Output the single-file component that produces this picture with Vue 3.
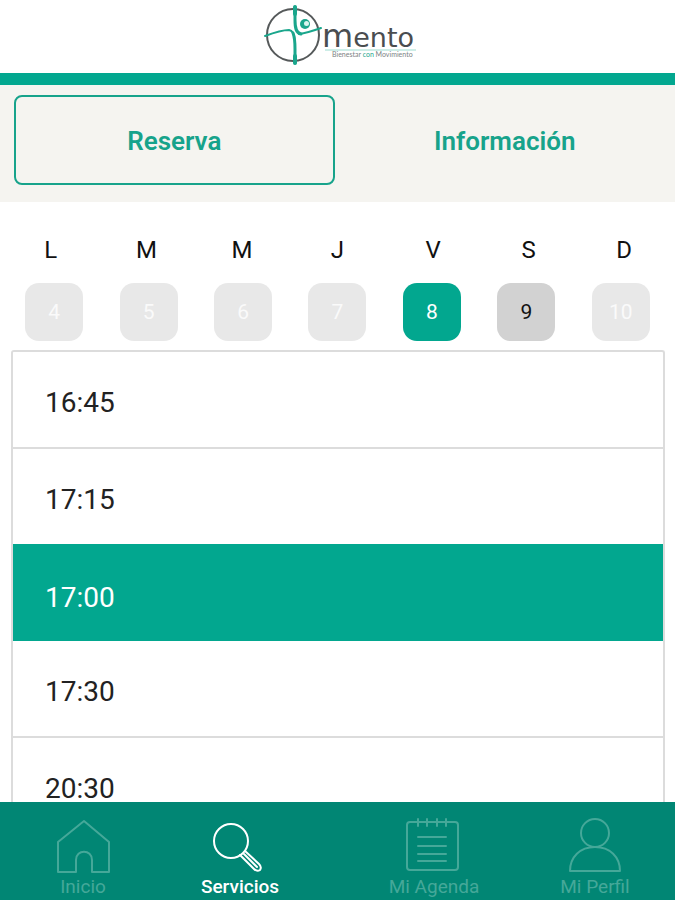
<template>
  <div class="app">
    <header class="header">
      <svg class="logo" viewBox="0 0 160 66" role="img" aria-label="Mento">
        <circle cx="33" cy="33" r="26" fill="none" stroke="#55595a" stroke-width="2" />
        <g fill="none" stroke="#1aa68c" stroke-linecap="round" stroke-linejoin="round">
          <path d="M5 34C13 31 22 28 29 28Q34 29 34.500 37" stroke-width="2" />
          <path d="M33 31C35 36 35 42 35 47V61" stroke-width="3" />
          <path d="M35 5V18C35 26 36 31 41 32" stroke-width="3" />
          <path d="M39 32C47 31 54 28.500 61 26" stroke-width="2" />
          <path d="M35 5V12M35 54V61" stroke-width="4" />
        </g>
        <circle cx="45" cy="22" r="5" fill="#1aa68c" />
        <circle cx="46.500" cy="21.500" r="2.500" fill="#d9f5ef" />
        <text x="62" y="45" class="logo-m">m<tspan class="logo-ento">ento</tspan></text>
        <path d="M65 48H156" stroke="#9bdccf" />
        <text x="72" y="55" class="logo-lema">Bienestar <tspan class="verde">con</tspan> Movimiento</text>
      </svg>
    </header>

    <div class="tabs">
      <button
        v-for="tab in tabs"
        :key="tab"
        type="button"
        class="tab"
        :class="{ activa: tab === tabActiva }"
        @click="tabActiva = tab"
      >
        {{ tab }}
      </button>
    </div>

    <main class="reserva">
      <div class="semana letras">
        <span v-for="dia in dias" :key="dia.numero">{{ dia.letra }}</span>
      </div>
      <div class="semana numeros">
        <button
          v-for="dia in dias"
          :key="dia.numero"
          type="button"
          class="dia"
          :class="{ seleccionado: dia.numero === diaActivo }"
          :disabled="!dia.disponible"
          @click="diaActivo = dia.numero"
        >
          {{ dia.numero }}
        </button>
      </div>

      <div class="horarios">
        <button
          v-for="hora in horas"
          :key="hora"
          type="button"
          class="hora"
          :class="{ seleccionada: hora === horaActiva }"
          @click="horaActiva = hora"
        >
          {{ hora }}
        </button>
      </div>
    </main>

    <nav class="menu">
      <a href="#inicio" class="enlace">
        <svg viewBox="0 0 56 56">
          <path d="M3 54V24L29 3L54 24V54H37V42C37 31 21 31 21 42V54Z" />
        </svg>
        <span>Inicio</span>
      </a>
      <a href="#servicios" class="enlace actual">
        <svg viewBox="0 0 56 56">
          <circle cx="19" cy="23" r="17" />
          <path d="M28 37L42 51Q45 54 48 52Q50 49 47 46L33 33M32 36L45 49" />
        </svg>
        <span>Servicios</span>
      </a>
      <a href="#agenda" class="enlace">
        <svg viewBox="0 0 56 56">
          <path d="M4 4H49Q52 4 52 7V49Q52 52 49 52H4Q1 52 1 49V7Q1 4 4 4" />
          <path d="M12 1V8M21 1V8M31 1V8M40 1V8M12 19H40M12 28H40M12 36H40M12 43H40" />
        </svg>
        <span>Mi Agenda</span>
      </a>
      <a href="#perfil" class="enlace">
        <svg viewBox="0 0 56 56">
          <circle cx="28" cy="15" r="14" />
          <path d="M3 53C3 39 13 29 28 29S53 39 53 53Z" />
        </svg>
        <span>Mi Perfil</span>
      </a>
    </nav>
  </div>
</template>

<script setup>
import { ref } from "vue";

const tabs = ["Reserva", "Información"];
const tabActiva = ref("Reserva");

const dias = [
  { letra: "L", numero: 4, disponible: false },
  { letra: "M", numero: 5, disponible: false },
  { letra: "M", numero: 6, disponible: false },
  { letra: "J", numero: 7, disponible: false },
  { letra: "V", numero: 8, disponible: true },
  { letra: "S", numero: 9, disponible: true },
  { letra: "D", numero: 10, disponible: false },
];
const diaActivo = ref(8);

const horas = ["16:45", "17:15", "17:00", "17:30", "20:30"];
const horaActiva = ref("17:00");
</script>

<style>
body {
  background-color: #fff;
}
</style>

<style scoped>
.app {
  display: flex;
  flex-direction: column;
  height: 100vh;
  font-family: Roboto, sans-serif;
  color: #111;
}

button {
  font-family: inherit;
  margin: 0;
  cursor: pointer;
}

.header {
  display: flex;
  justify-content: center;
  padding: 2px 0 5px 5px;
  border-bottom: 12px solid #02a78f;
}

.logo {
  display: block;
  width: 160px;
  height: 66px;
}

.logo-m {
  font-family: "DejaVu Sans", sans-serif;
  font-size: 32px;
  fill: #4a4d50;
}

.logo-ento {
  font-size: 27px;
}

.logo-lema {
  font-family: Lato, sans-serif;
  font-size: 7px;
  fill: #7d8284;
}

.verde {
  fill: #1aa68c;
}

.tabs {
  display: grid;
  grid-template-columns: 1fr 1fr;
  gap: 10px;
  padding: 10px 10px 17px 14px;
  background-color: #f5f4f0;
}

.tab {
  padding: 29px 0 27px;
  border: 2px solid transparent;
  border-radius: 8px;
  background: none;
  color: #17a38b;
  font-size: 26px;
  line-height: 30px;
  font-weight: 600;
}

.tab.activa {
  border-color: #17a38b;
}

.reserva {
  flex: 1;
  min-height: 0;
  display: flex;
  flex-direction: column;
  overflow: hidden;
}

.semana {
  display: grid;
  grid-template-columns: repeat(7, 1fr);
  justify-items: center;
}

.letras {
  padding: 33px 3px 18px;
  font-size: 24px;
  line-height: 30px;
}

.numeros {
  padding: 0 7px 9px;
}

.dia {
  width: 58px;
  height: 58px;
  padding: 0;
  border: none;
  border-radius: 14px;
  background-color: #d2d2d2;
  color: #111;
  font-size: 21px;
}

.dia:disabled {
  background-color: #e8e8e8;
  color: #fafafa;
}

.dia.seleccionado {
  background-color: #02a78f;
  color: #fff;
}

.horarios {
  flex: 1;
  min-height: 0;
  display: flex;
  flex-direction: column;
  margin: 0 10px 0 11px;
  border: 2px solid #dcdcdc;
  border-bottom: none;
  border-radius: 3px 3px 0 0;
  overflow: hidden;
}

.hora {
  flex-shrink: 0;
  padding: 35px 32px 28px;
  border: none;
  border-bottom: 2px solid #dcdcdc;
  background: none;
  color: #222;
  font-size: 28px;
  line-height: 32px;
  text-align: left;
}

.hora:has(+ .seleccionada) {
  border-bottom: none;
}

.hora.seleccionada {
  padding: 38px 32px 27px;
  border-bottom: none;
  background-color: #02a78f;
  color: #fff;
}

.menu {
  display: grid;
  grid-template-columns: 166fr 148fr 240fr 82fr;
  padding: 16px 39px 2px 0;
  background-color: #018674;
}

.enlace {
  display: flex;
  flex-direction: column;
  align-items: center;
  gap: 2px;
  color: #45a899;
  font-size: 19px;
  line-height: 22px;
  text-decoration: none;
  white-space: nowrap;
}

.enlace.actual {
  color: #fff;
  font-weight: 500;
}

.enlace svg {
  width: 56px;
  height: 56px;
  fill: none;
  stroke: currentColor;
  stroke-width: 2;
  stroke-linecap: round;
  stroke-linejoin: round;
  overflow: visible;
}
</style>
